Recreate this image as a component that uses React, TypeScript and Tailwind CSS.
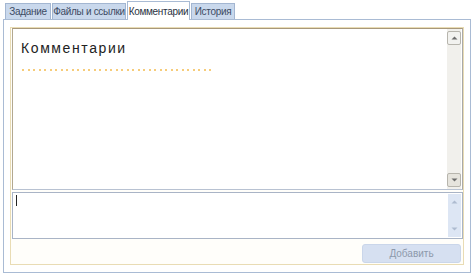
import React from "react";

const tabs = [
  { label: "Задание", w: "w-[46px]" },
  { label: "Файлы и ссылки", w: "w-[74px]" },
  { label: "Комментарии", w: "w-[63px]", active: true },
  { label: "История", w: "w-[44px]" },
];

function Arrow({ up, color }: { up?: boolean; color: string }) {
  return (
    <svg width="7" height="4" viewBox="0 0 7 4">
      {up ? (
        <path d="M0.5 3.5 L3.5 0.5 L6.5 3.5 Z" fill={color} />
      ) : (
        <path d="M0.5 0.5 L3.5 3.5 L6.5 0.5 Z" fill={color} />
      )}
    </svg>
  );
}

export default function App() {
  const dots = Array.from({ length: 35 });
  return (
    <div
      className="w-[474px] h-[274px] bg-white overflow-hidden flex flex-col"
      style={{ fontFamily: '"Liberation Sans", Arial, sans-serif' }}
    >
      <div className="flex items-end pl-[5px] h-[19px] gap-[1px]">
        {tabs.map((t) =>
          t.active ? (
            <div
              key={t.label}
              className={`${t.w} h-[19px] -mb-[1px] bg-white border border-b-0 border-[#a9bbd4] flex items-center justify-center whitespace-nowrap text-[10px] tracking-[-0.3px] text-[#2a3342] z-10`}
            >
              {t.label}
            </div>
          ) : (
            <div
              key={t.label}
              className={`${t.w} h-[16px] bg-[#c9d8ec] border border-b-0 border-[#a3b6d1] flex items-center justify-center whitespace-nowrap text-[10px] tracking-[-0.3px] text-[#3d4b63]`}
            >
              {t.label}
            </div>
          )
        )}
      </div>
      <div className="mx-[3px] h-[254px] border border-[#a9bbd4] bg-white pt-[7px] pb-[7px] px-[6px] flex">
        <div className="flex-1 border border-[#e9dcb4] bg-[#fffefa] flex flex-col">
          <div className="h-[162px] border border-t-[#a8987a] border-l-[#b3a88f] border-r-[#a9a9a9] border-b-[#b8c2d2] bg-white flex ml-[1px]">
            <div className="flex-1 pl-[8px] pt-[11px]">
              <div className="text-[14px] leading-[16px] tracking-[1.6px] text-[#222]">
                Комментарии
              </div>
              <div className="flex gap-[3.5px] mt-[13px] ml-[1px]">
                {dots.map((_, i) => (
                  <span key={i} className="w-[2px] h-[2px] bg-[#f6cc7a] block" />
                ))}
              </div>
            </div>
            <div className="w-[14px] bg-[#f1f0ec] flex flex-col justify-between py-[2px] mr-[1px]">
              <div className="h-[14px] bg-[#f2f2ef] border border-[#b7b5ad] rounded-[2px] flex items-center justify-center">
                <Arrow up color="#6c6c6c" />
              </div>
              <div className="h-[14px] bg-[#e6e4dd] border border-[#b7b5ad] rounded-[2px] flex items-center justify-center">
                <Arrow color="#6c6c6c" />
              </div>
            </div>
          </div>
          <div className="h-[47px] mt-[2px] ml-[1px] border border-[#a9b4c6] bg-white flex">
            <div className="flex-1 pl-[3px] pt-[2px]">
              <div className="w-[1px] h-[11px] bg-[#222]" />
            </div>
            <div className="w-[13px] bg-[#dde6f4] flex flex-col justify-between py-[6px] items-center mr-[1px] my-[1px]">
              <Arrow up color="#aebbd0" />
              <Arrow color="#aebbd0" />
            </div>
          </div>
          <div className="flex justify-end pt-[5px] pr-[2px]">
            <div className="w-[99px] h-[19px] bg-[#d6e0f1] rounded-[3px] border border-[#cad6ea] flex items-center justify-center text-[10px] text-[#8d99ab]">
              Добавить
            </div>
          </div>
        </div>
      </div>
    </div>
  );
}
